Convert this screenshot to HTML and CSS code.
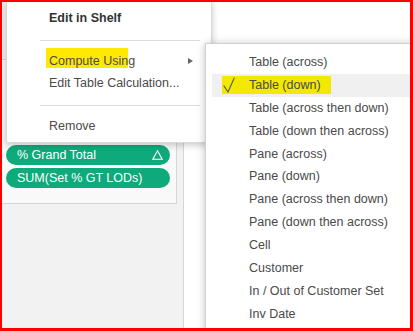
FILE: index.html
```html
<!DOCTYPE html>
<html lang="en">
<head>
    <meta charset="UTF-8">
    <meta name="viewport" content="width=device-width, initial-scale=1.0">
    <title>Compute Using</title>
    <link rel="stylesheet" href="styles.css">
</head>
<body>

<div class="frame">
    <div class="sidebar">
        <div class="shelf">
            <div class="pill"></div>
            <div class="pill"></div>
            <div class="pill">
                <span>% Grand Total</span>
                <svg class="delta" width="11" height="10" viewBox="0 0 11 10"><polygon points="5.5,0.8 10.2,9.3 0.8,9.3" fill="none" stroke="#fff" stroke-width="1.1"/></svg>
            </div>
            <div class="pill"><span>SUM(Set % GT LODs)</span></div>
        </div>
    </div>
    <div class="canvas"></div>

    <!-- context menu of the pill -->
    <ul class="menu">
        <li class="menu-item bold">Edit in Shelf</li>
        <li class="menu-sep"></li>
        <li class="menu-item"><span class="mark-a">Compute Usin</span>g<span class="arrow"></span></li>
        <li class="menu-item">Edit Table Calculation...</li>
        <li class="menu-sep"></li>
        <li class="menu-item">Remove</li>
    </ul>

    <!-- compute using submenu -->
    <ul class="submenu">
        <li class="sub-item">Table (across)</li>
        <li class="sub-item active">
            <span class="mark-b">
                <svg class="check" width="12" height="16" viewBox="0 0 12 16"><polyline points="0.6,8.5 5,15 11.4,0.6" fill="none" stroke="#555" stroke-width="1.1"/></svg>
                Table (down)
            </span>
        </li>
        <li class="sub-item">Table (across then down)</li>
        <li class="sub-item">Table (down then across)</li>
        <li class="sub-item">Pane (across)</li>
        <li class="sub-item">Pane (down)</li>
        <li class="sub-item">Pane (across then down)</li>
        <li class="sub-item">Pane (down then across)</li>
        <li class="sub-item">Cell</li>
        <li class="sub-item">Customer</li>
        <li class="sub-item">In / Out of Customer Set</li>
        <li class="sub-item">Inv Date</li>
    </ul>
</div>

</body>
</html>
```

FILE: styles.css
```css
body {
    margin: 0;
    font-family: 'Liberation Sans', Arial, sans-serif;
    font-size: 12.5px;
    color: #4a4a4a;
}
ul {
    list-style: none;
    margin: 0;
    padding: 0;
}
.frame {
    position: relative;
    display: flex;
    width: 413px;
    height: 331px;
    box-sizing: border-box;
    border-style: solid;
    border-color: #ff0000;
    border-width: 2px 3px 3px 2px;
    overflow: hidden;
    background-color: #fff;
}
.sidebar {
    width: 181px;
    flex-shrink: 0;
    padding-top: 57px;
    background-color: #f2f2f2;
    border-right: 1px solid #d6d6d6;
}
.shelf {
    width: 175px;
    height: 145px;
    box-sizing: border-box;
    padding: 39px 0 0 4px;
    background-color: #f9f9f9;
    border: 1px solid #d6d6d6;
    border-left: none;
}
.pill {
    display: flex;
    align-items: center;
    justify-content: space-between;
    width: 164px;
    height: 20px;
    box-sizing: border-box;
    margin-bottom: 3px;
    padding: 0 7px 0 11px;
    border-radius: 10px;
    background-color: #0eaa7b;
    color: #fff;
}
.canvas {
    flex: 1;
    background-color: #fff;
}

/* menus */
.menu {
    position: absolute;
    z-index: 2;
    left: 4px;
    top: -1px;
    width: 206px;
    box-sizing: border-box;
    padding: 5px 0;
    background-color: #fff;
    border: 1px solid #d9d9d9;
    box-shadow: 0 2px 7px rgba(0, 0, 0, 0.22);
}
.menu-item {
    display: flex;
    align-items: center;
    height: 22px;
    line-height: 22px;
    padding: 0 18px 0 42px;
}
.menu-item.bold {
    font-weight: bold;
    color: #333;
}
.menu-sep {
    height: 1px;
    margin: 11px 11px 9px 33px;
    background-color: #dcdcdc;
}
.mark-a {
    height: 20px;
    box-sizing: border-box;
    margin: 0 0 7px -3px;
    padding: 7px 0 0 3px;
    line-height: 13px;
    background-color: #ffe900;
}
.arrow {
    margin-left: auto;
    width: 0;
    height: 0;
    border-left: 5px solid #666;
    border-top: 3.5px solid transparent;
    border-bottom: 3.5px solid transparent;
}
.submenu {
    position: absolute;
    z-index: 3;
    left: 203px;
    top: 41px;
    width: 240px;
    height: 320px;
    padding: 7px 0 0 6px;
    background-color: #fff;
    border: 1px solid #d0d0d0;
    box-shadow: 0 1px 8px rgba(0, 0, 0, 0.25);
}
.sub-item {
    display: flex;
    align-items: center;
    height: 22.9px;
    line-height: 22.9px;
    padding-left: 37px;
}
.sub-item.active {
    padding-left: 0;
    background-color: #f0f0f0;
}
.mark-b {
    display: flex;
    align-items: center;
    height: 18px;
    margin-left: 10px;
    padding: 0 10px 0 1px;
    background-color: #f3e800;
}
.check {
    margin-right: 14px;
}
```
